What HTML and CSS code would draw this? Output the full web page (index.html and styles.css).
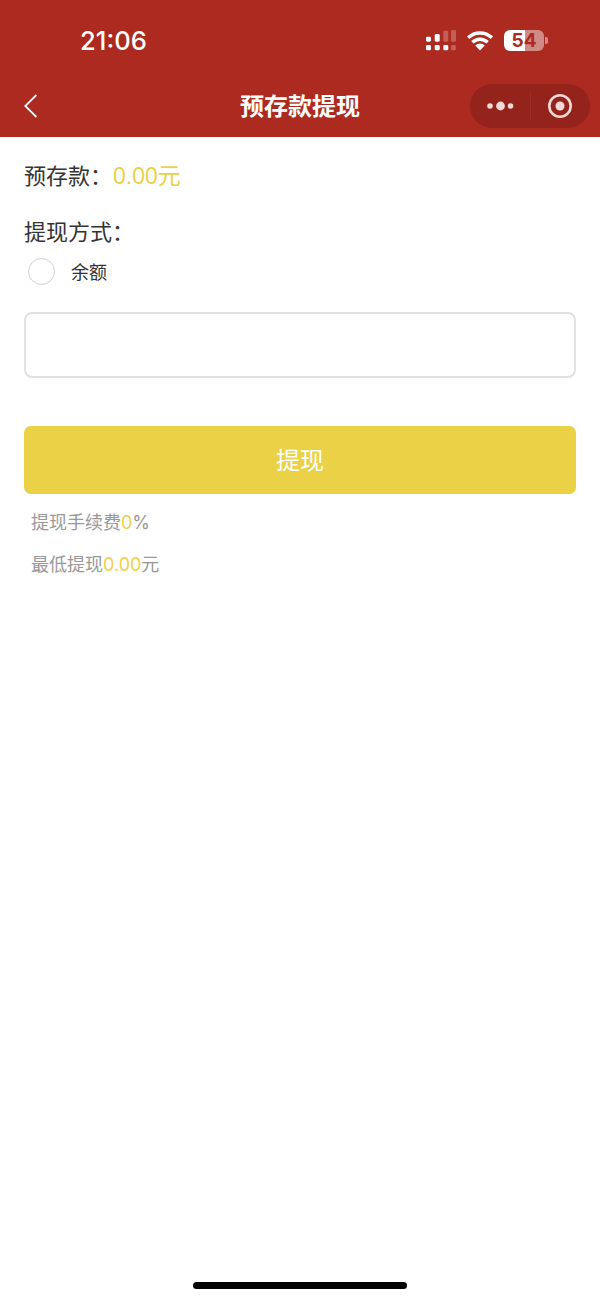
FILE: index.html
```html
<!DOCTYPE html>
<html lang="zh">
<head>
<meta charset="utf-8">
<title>预存款提现</title>
<link rel="stylesheet" href="styles.css">
</head>
<body>
<header class="top">
  <div class="status">
    <span class="time">21:06</span>
    <div class="status-icons">
      <svg class="signal" width="32" height="24" viewBox="0 0 32 24">
        <g fill="#fff">
          <rect x="2" y="8.7" width="5" height="5" rx="1.4"/>
          <rect x="10.7" y="6" width="5" height="7.7" rx="1.4"/>
          <rect x="2" y="17" width="5" height="5.3" rx="1.4"/>
          <rect x="10.7" y="17" width="5" height="5.3" rx="1.4"/>
          <rect x="19.3" y="17" width="5" height="5.3" rx="1.4"/>
        </g>
        <g fill="#fff" fill-opacity=".25">
          <rect x="19.3" y="2.7" width="5" height="11" rx="1.4"/>
          <rect x="27" y="2" width="5" height="11.7" rx="1.4"/>
          <rect x="27" y="17" width="5" height="5.3" rx="1.4"/>
        </g>
      </svg>
      <svg class="wifi" width="28" height="22" viewBox="0 0 28 22">
        <path d="M15 21.6L10.2 16.6A6.8 6.8 0 0 1 19.8 16.6Z" fill="#fff"/>
        <path d="M7.4 13.3A11 11 0 0 1 22.6 13.3" fill="none" stroke="#fff" stroke-width="3.6"/>
        <path d="M3.2 8.7A17 17 0 0 1 26.8 8.7" fill="none" stroke="#fff" stroke-width="3.6"/>
      </svg>
      <div class="battery">
        <div class="battery-body"><span class="battery-num">54</span></div>
        <span class="battery-cap"></span>
      </div>
    </div>
  </div>
  <div class="nav">
    <svg class="back" width="14" height="24" viewBox="0 0 14 24">
      <path d="M12.4 1L1.2 12l11.2 11" fill="none" stroke="#fff" stroke-width="1.8"/>
    </svg>
    <h1 class="title">预存款提现</h1>
    <div class="capsule">
      <div class="capsule-side">
        <svg width="28" height="10" viewBox="0 0 28 10">
          <g fill="#f0d9d6"><circle cx="4" cy="5" r="2.8"/><circle cx="14.5" cy="5" r="4.4"/><circle cx="24.5" cy="5" r="2.8"/></g>
        </svg>
      </div>
      <span class="capsule-line"></span>
      <div class="capsule-side">
        <svg width="26" height="26" viewBox="0 0 26 26">
          <circle cx="13" cy="13" r="10.7" fill="none" stroke="#f0d9d6" stroke-width="2.6"/>
          <circle cx="13" cy="13" r="4.5" fill="#f0d9d6"/>
        </svg>
      </div>
    </div>
  </div>
</header>
<main class="content">
  <div class="line balance">预存款：<span class="accent amount">0.00元</span></div>
  <div class="line method">提现方式：</div>
  <label class="radio-row"><span class="radio"></span><span class="radio-text">余额</span></label>
  <div class="field"></div>
  <div class="btn">提现</div>
  <p class="note fee">提现手续费<span class="accent">0</span>%</p>
  <p class="note min">最低提现<span class="accent">0.00</span>元</p>
</main>
<div class="home-bar"></div>
</body>
</html>
```
FILE: styles.css
```css
* { box-sizing: border-box; }
html, body { margin: 0; padding: 0; }
body {
  width: 600px;
  height: 1300px;
  position: relative;
  overflow: hidden;
  background: #fff;
  font-family: "Noto Sans CJK SC", "Liberation Sans", sans-serif;
  color: #333;
}
.top {
  background: #ad2a20;
  height: 137px;
  color: #fff;
}
.status {
  height: 80px;
  display: flex;
  justify-content: space-between;
  align-items: flex-start;
  padding: 0 52px 0 80px;
}
.time {
  font-family: Inter, "Liberation Sans", sans-serif;
  font-size: 25.6px;
  font-weight: 500;
  line-height: 32px;
  margin-top: 25px;
}
.status-icons {
  display: flex;
  align-items: center;
  margin-top: 28px;
}
.signal { margin-right: 9px; }
.wifi { margin-right: 11px; }
.battery { display: flex; align-items: center; }
.battery-body {
  width: 40px;
  height: 21px;
  border-radius: 6px;
  background: linear-gradient(90deg, #fff 0 53%, rgba(255,255,255,.45) 53%);
  text-align: center;
}
.battery-num {
  font-family: Inter, "Liberation Sans", sans-serif;
  font-size: 19px;
  font-weight: 700;
  line-height: 21px;
  color: #ad2a20;
  display: block;
}
.battery-cap {
  width: 3px;
  height: 7px;
  margin-left: 1px;
  border-radius: 0 2px 2px 0;
  background: rgba(255,255,255,.45);
}
.nav {
  height: 57px;
  position: relative;
  display: flex;
  align-items: flex-start;
  justify-content: space-between;
  padding: 4px 10px 0 24px;
}
.back { margin-top: 10px; }
.title {
  position: absolute;
  left: 0;
  right: 0;
  top: 8px;
  margin: 0;
  text-align: center;
  font-size: 24px;
  font-weight: 700;
  line-height: 34px;
}
.capsule {
  width: 120px;
  height: 44px;
  border-radius: 22px;
  background: #94231b;
  display: flex;
  align-items: center;
  position: relative;
}
.capsule-side {
  flex: 1;
  display: flex;
  align-items: center;
  justify-content: center;
}
.capsule-line { width: 1px; height: 30px; background: #a02c24; }
.content { padding: 0 24px; }
.line {
  font-size: 22px;
  line-height: 32px;
  color: #333;
}
.balance { margin-top: 21px; }
.amount {
  font-family: "Liberation Sans", "Noto Sans CJK SC", sans-serif;
  font-size: 23px;
  margin-left: 1px;
}
.accent { color: #ebd146; }
.method { margin-top: 22px; }
.radio-row {
  display: flex;
  align-items: center;
  height: 28px;
  margin: 11px 0 0 4px;
}
.radio {
  width: 27px;
  height: 27px;
  border-radius: 50%;
  border: 1.5px solid #d1d1d1;
  background: #fff;
}
.radio-text {
  font-size: 18px;
  margin-left: 16px;
  color: #333;
}
.field {
  height: 66px;
  margin-top: 27px;
  border: 2px solid #e2e2e4;
  border-radius: 8px;
  background: #fff;
}
.btn {
  height: 68px;
  margin-top: 48px;
  border-radius: 7px;
  background: #ebd146;
  color: #fff;
  font-size: 24px;
  line-height: 66px;
  text-align: center;
}
.note {
  margin: 0 0 0 7px;
  font-family: Inter, "Noto Sans CJK SC", sans-serif;
  font-size: 18px;
  line-height: 26px;
  color: #999;
}
.fee { margin-top: 16px; }
.min { margin-top: 16px; }
.home-bar {
  position: absolute;
  left: 193px;
  bottom: 11px;
  width: 214px;
  height: 7px;
  border-radius: 4px;
  background: #000;
}
```
